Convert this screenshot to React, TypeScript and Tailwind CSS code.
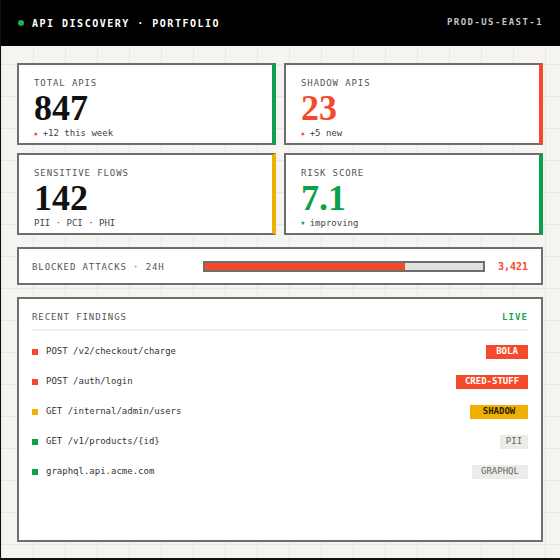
import React from "react";

// Palette pulled from the screenshot.
const MONO = "font-['DejaVu_Sans_Mono','Liberation_Mono',monospace]";
const SERIF = "font-['Liberation_Serif','DejaVu_Serif',serif]";

type Stat = {
  label: string;
  value: string;
  valueCls: string;
  accentCls: string;
  sub: string;
  arrow?: "up" | "down";
  arrowCls?: string;
};

const STATS: Stat[] = [
  { label: "TOTAL APIS", value: "847", valueCls: "text-[#111]", accentCls: "border-r-[#0ba14a]", sub: "+12 this week", arrow: "up", arrowCls: "text-[#f4492a]" },
  { label: "SHADOW APIS", value: "23", valueCls: "text-[#f4492a]", accentCls: "border-r-[#f4492a]", sub: "+5 new", arrow: "up", arrowCls: "text-[#f4492a]" },
  { label: "SENSITIVE FLOWS", value: "142", valueCls: "text-[#111]", accentCls: "border-r-[#f0b000]", sub: "PII · PCI · PHI" },
  { label: "RISK SCORE", value: "7.1", valueCls: "text-[#0ba14a]", accentCls: "border-r-[#0ba14a]", sub: "improving", arrow: "down", arrowCls: "text-[#0ba14a]" },
];

const FINDINGS = [
  { path: "POST /v2/checkout/charge", dot: "bg-[#f4492a]", tag: "BOLA", tagCls: "w-[42px] bg-[#f4492a] text-white font-bold" },
  { path: "POST /auth/login", dot: "bg-[#f4492a]", tag: "CRED-STUFF", tagCls: "w-[72px] bg-[#f4492a] text-white font-bold" },
  { path: "GET /internal/admin/users", dot: "bg-[#f0b000]", tag: "SHADOW", tagCls: "w-[58px] bg-[#f0b000] text-[#2a2100] font-bold" },
  { path: "GET /v1/products/{id}", dot: "bg-[#0ba14a]", tag: "PII", tagCls: "w-[28px] bg-[#ecebe8] text-[#666]" },
  { path: "graphql.api.acme.com", dot: "bg-[#0ba14a]", tag: "GRAPHQL", tagCls: "w-[56px] bg-[#ecebe8] text-[#666]" },
];

function StatCard({ s }: { s: Stat }) {
  return (
    <div className={`h-[82px] border-2 border-r-4 border-[#6e6e6e] ${s.accentCls} bg-white px-[15px] pt-[12px]`}>
      <div className={`${MONO} text-[9px] leading-[12px] tracking-[0.1em] text-[#555]`}>{s.label}</div>
      <div className={`${SERIF} mt-[1px] text-[36px] font-bold leading-none ${s.valueCls}`}>{s.value}</div>
      <div className={`${MONO} mt-[1px] flex items-center gap-[5px] text-[9px] leading-[12px] text-[#444]`}>
        {s.arrow && <span className={`text-[6px] ${s.arrowCls}`}>{s.arrow === "up" ? "▲" : "▼"}</span>}
        <span>{s.sub}</span>
      </div>
    </div>
  );
}

export default function App() {
  return (
    <div className="flex h-[560px] w-[560px] flex-col border-b-2 border-l border-[#111] bg-[#f5f4f0] bg-[linear-gradient(to_right,#e8e7e2_1px,transparent_1px),linear-gradient(to_bottom,#e8e7e2_1px,transparent_1px)] bg-[size:32px_32px]">
      {/* top bar */}
      <div className="flex h-[46px] shrink-0 items-center justify-between bg-black pl-[17px] pr-[17px]">
        <div className="flex items-center gap-2">
          <span className="h-[6px] w-[6px] rounded-full bg-[#1fb04f]" />
          <span className={`${MONO} text-[10px] font-bold tracking-[0.15em] text-white`}>API DISCOVERY · PORTFOLIO</span>
        </div>
        <span className={`${MONO} text-[9px] font-bold tracking-[0.16em] text-[#c4c4c4]`}>PROD-US-EAST-1</span>
      </div>

      <div className="flex flex-1 flex-col pb-4 pl-4 pr-[17px] pt-[17px]">
        <div className="grid grid-cols-2 gap-2">
          {STATS.map((s) => (
            <StatCard key={s.label} s={s} />
          ))}
        </div>

        {/* blocked attacks */}
        <div className="mt-3 flex h-[38px] items-center border-2 border-[#6e6e6e] bg-white px-[13px] pt-[1px]">
          <span className={`${MONO} w-[171px] shrink-0 text-[9px] leading-[12px] tracking-[0.1em] text-[#555]`}>BLOCKED ATTACKS · 24H</span>
          <div className="h-[11px] flex-1 border-2 border-[#6e6e6e] bg-[#e2e2e0]">
            <div className="h-full bg-[#f4492a]" style={{ width: "72%" }} />
          </div>
          <span className={`${MONO} ml-[13px] text-[10px] font-bold leading-[12px] text-[#f4492a]`}>3,421</span>
        </div>

        {/* findings */}
        <div className="mt-3 flex-1 border-2 border-[#6e6e6e] bg-white px-[13px] pt-3">
          <div className="flex items-center justify-between border-b-2 border-[#f0f0ee] pb-[6px]">
            <span className={`${MONO} text-[9px] leading-[12px] tracking-[0.1em] text-[#555]`}>RECENT FINDINGS</span>
            <span className={`${MONO} text-[9px] font-bold leading-[12px] tracking-[0.12em] text-[#1aa84f]`}>LIVE</span>
          </div>
          <div className="pt-[6px]">
            {FINDINGS.map((f) => (
              <div key={f.path} className="flex h-[30px] items-center justify-between">
                <div className="flex items-center gap-2">
                  <span className={`h-[6px] w-[6px] ${f.dot}`} />
                  <span className={`${MONO} text-[9px] text-[#333]`}>{f.path}</span>
                </div>
                <span className={`${MONO} flex h-[14px] items-center justify-center text-[9px] ${f.tagCls}`}>{f.tag}</span>
              </div>
            ))}
          </div>
        </div>
      </div>
    </div>
  );
}
